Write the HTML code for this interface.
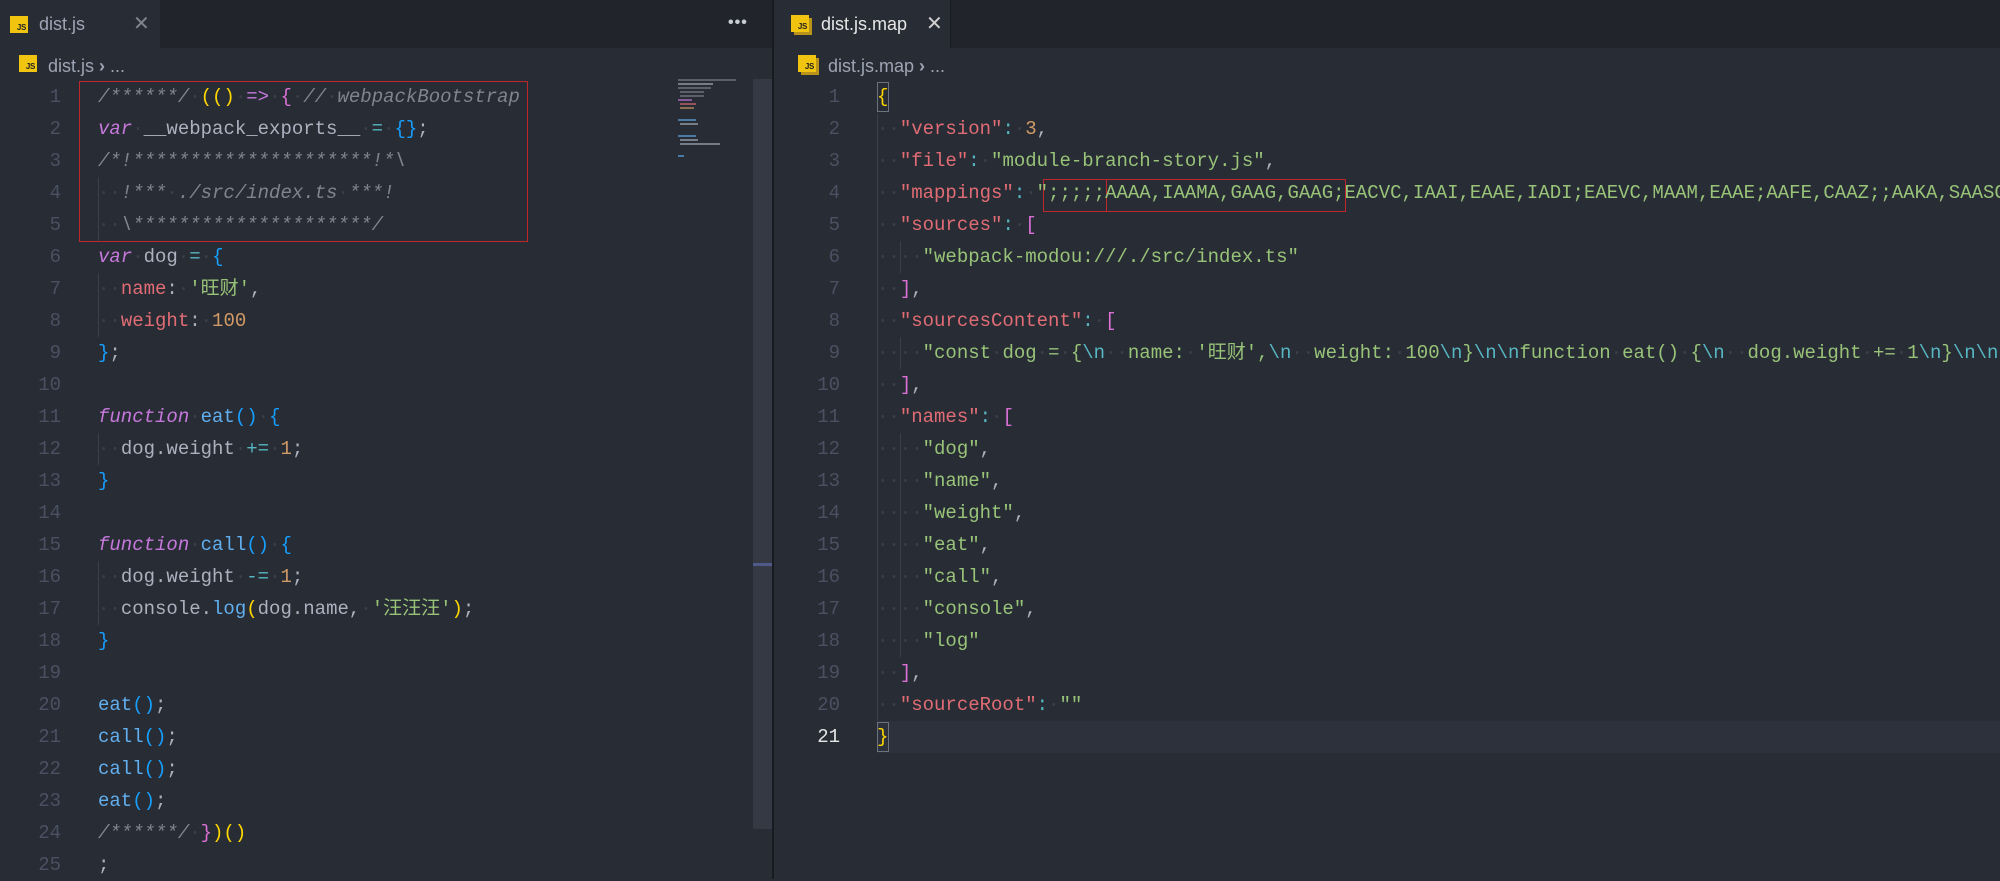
<!DOCTYPE html>
<html><head><meta charset="utf-8"><style>
*{margin:0;padding:0;box-sizing:border-box}
body{width:2000px;height:879px;background:#282c34;overflow:hidden;position:relative;font-family:"Liberation Sans","Noto Sans CJK SC",sans-serif}
.bar{position:absolute;top:0;height:48px;background:#21252b}
.tab{position:absolute;top:0;height:48px;background:#282c34;color:#9da5b4;font-size:18px;line-height:48px}
.ico{position:absolute;width:18px;height:17px;background:#f1c40f;color:#222;font:bold 8px/9px "Liberation Sans",sans-serif;text-align:right;padding-top:7px;padding-right:2px;letter-spacing:-0.3px}
.code{position:absolute;font-family:"Liberation Mono","Noto Sans CJK SC",monospace;font-size:19px;line-height:32px;height:32px;white-space:pre;color:#abb2bf}
.ln{position:absolute;font-family:"Liberation Mono",monospace;font-size:19px;line-height:32px;color:#495162;text-align:right;width:40px}
i{font-style:normal;color:#3b4048}
.c{color:#7f848e;font-style:italic}.k{color:#c678dd;font-style:italic}.o{color:#56b6c2}.g{color:#ffd700}.p{color:#da70d6}.b{color:#179fff}
.r{color:#e06c75}.s{color:#98c379}.n{color:#d19a66}.f{color:#61afef}
.guide{position:absolute;width:1px;background:#3b4048}
.mm{position:absolute;height:2px;opacity:.6}
</style></head><body>
<!-- left pane -->
<div class="bar" style="left:0;width:772px"></div>
<div class="tab" style="left:0;width:160px"><div class="ico" style="left:10px;top:16px">JS</div><span style="position:absolute;left:39px">dist.js</span><span style="position:absolute;left:133px;font-size:20px;color:#7f848e">✕</span></div>
<div style="position:absolute;left:728px;top:14px;color:#c8ccd4;font-size:16px;letter-spacing:1px;font-weight:bold">•••</div>
<div class="ico" style="left:19px;top:55px">JS</div>
<div style="position:absolute;left:48px;top:52px;color:#9da5b4;font-size:18px;line-height:28px">dist.js <span style="font-weight:bold">›</span> ...</div>
<div style="position:absolute;left:772px;top:0;width:2px;height:879px;background:#181a1f"></div>
<div style="position:absolute;left:753px;top:79px;width:19px;height:750px;background:#343944"></div>
<div style="position:absolute;left:753px;top:563px;width:19px;height:3px;background:#4d5a8a"></div>
<div style="position:absolute;left:678px;top:79px;width:75px;height:80px">
<div class="mm" style="left:0;top:0;width:58px;background:#7f848e"></div>
<div class="mm" style="left:0;top:4px;width:35px;background:#abb2bf"></div>
<div class="mm" style="left:0;top:8px;width:33px;background:#7f848e"></div>
<div class="mm" style="left:2px;top:12px;width:24px;background:#7f848e"></div>
<div class="mm" style="left:2px;top:16px;width:24px;background:#7f848e"></div>
<div class="mm" style="left:0;top:20px;width:14px;background:#c678dd"></div>
<div class="mm" style="left:2px;top:24px;width:16px;background:#e06c75"></div>
<div class="mm" style="left:2px;top:28px;width:14px;background:#d19a66"></div>
<div class="mm" style="left:0;top:40px;width:18px;background:#61afef"></div>
<div class="mm" style="left:2px;top:44px;width:18px;background:#abb2bf"></div>
<div class="mm" style="left:0;top:56px;width:18px;background:#61afef"></div>
<div class="mm" style="left:2px;top:60px;width:18px;background:#abb2bf"></div>
<div class="mm" style="left:2px;top:64px;width:40px;background:#abb2bf"></div>
<div class="mm" style="left:0;top:76px;width:6px;background:#61afef"></div>
</div>
<div style="position:absolute;left:79px;top:81px;width:449px;height:161px;border:1px solid #c0272d"></div>
<div class="guide" style="left:98px;top:177px;height:64px"></div>
<div class="guide" style="left:98px;top:273px;height:64px"></div>
<div class="guide" style="left:98px;top:433px;height:32px"></div>
<div class="guide" style="left:98px;top:561px;height:64px"></div>

<div class="ln" style="left:21px;top:81px">1</div><div class="code" style="left:98px;top:81px"><span class="c">/******/</span><i>·</i><span class="g">(()</span><i>·</i><span class="k" style="font-style:normal">=&gt;</span><i>·</i><span class="p">{</span><i>·</i><span class="c">//<i>·</i>webpackBootstrap</span></div>
<div class="ln" style="left:21px;top:113px">2</div><div class="code" style="left:98px;top:113px"><span class="k">var</span><i>·</i>__webpack_exports__<i>·</i><span class="o">=</span><i>·</i><span class="b">{}</span>;</div>
<div class="ln" style="left:21px;top:145px">3</div><div class="code" style="left:98px;top:145px"><span class="c">/*!*********************!*\</span></div>
<div class="ln" style="left:21px;top:177px">4</div><div class="code" style="left:98px;top:177px"><i>··</i><span class="c">!***<i>·</i>./src/index.ts<i>·</i>***!</span></div>
<div class="ln" style="left:21px;top:209px">5</div><div class="code" style="left:98px;top:209px"><i>··</i><span class="c">\*********************/</span></div>
<div class="ln" style="left:21px;top:241px">6</div><div class="code" style="left:98px;top:241px"><span class="k">var</span><i>·</i>dog<i>·</i><span class="o">=</span><i>·</i><span class="b">{</span></div>
<div class="ln" style="left:21px;top:273px">7</div><div class="code" style="left:98px;top:273px"><i>··</i><span class="r">name</span>:<i>·</i><span class="s">'旺财'</span>,</div>
<div class="ln" style="left:21px;top:305px">8</div><div class="code" style="left:98px;top:305px"><i>··</i><span class="r">weight</span>:<i>·</i><span class="n">100</span></div>
<div class="ln" style="left:21px;top:337px">9</div><div class="code" style="left:98px;top:337px"><span class="b">}</span>;</div>
<div class="ln" style="left:21px;top:369px">10</div>
<div class="ln" style="left:21px;top:401px">11</div><div class="code" style="left:98px;top:401px"><span class="k">function</span><i>·</i><span class="f">eat</span><span class="b">()</span><i>·</i><span class="b">{</span></div>
<div class="ln" style="left:21px;top:433px">12</div><div class="code" style="left:98px;top:433px"><i>··</i>dog.weight<i>·</i><span class="o">+=</span><i>·</i><span class="n">1</span>;</div>
<div class="ln" style="left:21px;top:465px">13</div><div class="code" style="left:98px;top:465px"><span class="b">}</span></div>
<div class="ln" style="left:21px;top:497px">14</div>
<div class="ln" style="left:21px;top:529px">15</div><div class="code" style="left:98px;top:529px"><span class="k">function</span><i>·</i><span class="f">call</span><span class="b">()</span><i>·</i><span class="b">{</span></div>
<div class="ln" style="left:21px;top:561px">16</div><div class="code" style="left:98px;top:561px"><i>··</i>dog.weight<i>·</i><span class="o">-=</span><i>·</i><span class="n">1</span>;</div>
<div class="ln" style="left:21px;top:593px">17</div><div class="code" style="left:98px;top:593px"><i>··</i>console.<span class="f">log</span><span class="g">(</span>dog.name,<i>·</i><span class="s">'汪汪汪'</span><span class="g">)</span>;</div>
<div class="ln" style="left:21px;top:625px">18</div><div class="code" style="left:98px;top:625px"><span class="b">}</span></div>
<div class="ln" style="left:21px;top:657px">19</div>
<div class="ln" style="left:21px;top:689px">20</div><div class="code" style="left:98px;top:689px"><span class="f">eat</span><span class="b">()</span>;</div>
<div class="ln" style="left:21px;top:721px">21</div><div class="code" style="left:98px;top:721px"><span class="f">call</span><span class="b">()</span>;</div>
<div class="ln" style="left:21px;top:753px">22</div><div class="code" style="left:98px;top:753px"><span class="f">call</span><span class="b">()</span>;</div>
<div class="ln" style="left:21px;top:785px">23</div><div class="code" style="left:98px;top:785px"><span class="f">eat</span><span class="b">()</span>;</div>
<div class="ln" style="left:21px;top:817px">24</div><div class="code" style="left:98px;top:817px"><span class="c">/******/</span><i>·</i><span class="p">}</span><span class="g">)()</span></div>
<div class="ln" style="left:21px;top:849px">25</div><div class="code" style="left:98px;top:849px">;</div>

<!-- right pane -->
<div class="bar" style="left:774px;width:1226px"></div>
<div class="tab" style="left:774px;width:176px;color:#e6e6e6"><div class="ico" style="left:17px;top:15px;box-shadow:3px 3px 0 #b8941a">JS</div><span style="position:absolute;left:47px">dist.js.map</span><span style="position:absolute;left:152px;font-size:20px;color:#d0d0d0">✕</span></div>
<div style="position:absolute;left:950px;top:0;width:1px;height:48px;background:#181a1f"></div>
<div class="ico" style="left:798px;top:55px;box-shadow:3px 3px 0 #b8941a">JS</div>
<div style="position:absolute;left:828px;top:52px;color:#9da5b4;font-size:18px;line-height:28px">dist.js.map <span style="font-weight:bold">›</span> ...</div>
<div style="position:absolute;left:877px;top:721px;width:1123px;height:32px;background:#2c313c"></div>
<div style="position:absolute;left:877px;top:82px;width:12px;height:30px;border:1px solid #6b7280"></div>
<div style="position:absolute;left:877px;top:722px;width:12px;height:30px;border:1px solid #6b7280"></div>
<div class="guide" style="left:877px;top:113px;height:608px;background:#3b4048"></div>
<div class="guide" style="left:900px;top:241px;height:32px"></div>
<div class="guide" style="left:900px;top:337px;height:32px"></div>
<div class="guide" style="left:900px;top:433px;height:224px"></div>
<div style="position:absolute;left:1043px;top:179px;width:303px;height:33px;border:1px solid #c0272d"></div>
<div style="position:absolute;left:1106px;top:179px;width:1px;height:33px;background:#c0272d"></div>

<div class="ln" style="left:800px;top:81px">1</div><div class="code" style="left:877px;top:81px"><span class="g">{</span></div>
<div class="ln" style="left:800px;top:113px">2</div><div class="code" style="left:877px;top:113px"><i>··</i><span class="r">"version"</span><span class="o">:</span><i>·</i><span class="n">3</span>,</div>
<div class="ln" style="left:800px;top:145px">3</div><div class="code" style="left:877px;top:145px"><i>··</i><span class="r">"file"</span><span class="o">:</span><i>·</i><span class="s">"module-branch-story.js"</span>,</div>
<div class="ln" style="left:800px;top:177px">4</div><div class="code" style="left:877px;top:177px"><i>··</i><span class="r">"mappings"</span><span class="o">:</span><i>·</i><span class="s">";;;;;AAAA,IAAMA,GAAG,GAAG;EACVC,IAAI,EAAE,IADI;EAEVC,MAAM,EAAE;AAFE,CAAZ;;AAKA,SAASC,GAAT</span></div>
<div class="ln" style="left:800px;top:209px">5</div><div class="code" style="left:877px;top:209px"><i>··</i><span class="r">"sources"</span><span class="o">:</span><i>·</i><span class="p">[</span></div>
<div class="ln" style="left:800px;top:241px">6</div><div class="code" style="left:877px;top:241px"><i>····</i><span class="s">"webpack-modou:///./src/index.ts"</span></div>
<div class="ln" style="left:800px;top:273px">7</div><div class="code" style="left:877px;top:273px"><i>··</i><span class="p">]</span>,</div>
<div class="ln" style="left:800px;top:305px">8</div><div class="code" style="left:877px;top:305px"><i>··</i><span class="r">"sourcesContent"</span><span class="o">:</span><i>·</i><span class="p">[</span></div>
<div class="ln" style="left:800px;top:337px">9</div><div class="code" style="left:877px;top:337px"><i>····</i><span class="s">"const<i>·</i>dog<i>·</i>=<i>·</i>{<span class="o">\n</span><i>··</i>name:<i>·</i>'旺财',<span class="o">\n</span><i>··</i>weight:<i>·</i>100<span class="o">\n</span>}<span class="o">\n\n</span>function<i>·</i>eat()<i>·</i>{<span class="o">\n</span><i>··</i>dog.weight<i>·</i>+=<i>·</i>1<span class="o">\n</span>}<span class="o">\n\n</span></span></div>
<div class="ln" style="left:800px;top:369px">10</div><div class="code" style="left:877px;top:369px"><i>··</i><span class="p">]</span>,</div>
<div class="ln" style="left:800px;top:401px">11</div><div class="code" style="left:877px;top:401px"><i>··</i><span class="r">"names"</span><span class="o">:</span><i>·</i><span class="p">[</span></div>
<div class="ln" style="left:800px;top:433px">12</div><div class="code" style="left:877px;top:433px"><i>····</i><span class="s">"dog"</span>,</div>
<div class="ln" style="left:800px;top:465px">13</div><div class="code" style="left:877px;top:465px"><i>····</i><span class="s">"name"</span>,</div>
<div class="ln" style="left:800px;top:497px">14</div><div class="code" style="left:877px;top:497px"><i>····</i><span class="s">"weight"</span>,</div>
<div class="ln" style="left:800px;top:529px">15</div><div class="code" style="left:877px;top:529px"><i>····</i><span class="s">"eat"</span>,</div>
<div class="ln" style="left:800px;top:561px">16</div><div class="code" style="left:877px;top:561px"><i>····</i><span class="s">"call"</span>,</div>
<div class="ln" style="left:800px;top:593px">17</div><div class="code" style="left:877px;top:593px"><i>····</i><span class="s">"console"</span>,</div>
<div class="ln" style="left:800px;top:625px">18</div><div class="code" style="left:877px;top:625px"><i>····</i><span class="s">"log"</span></div>
<div class="ln" style="left:800px;top:657px">19</div><div class="code" style="left:877px;top:657px"><i>··</i><span class="p">]</span>,</div>
<div class="ln" style="left:800px;top:689px">20</div><div class="code" style="left:877px;top:689px"><i>··</i><span class="r">"sourceRoot"</span><span class="o">:</span><i>·</i><span class="s">""</span></div>
<div class="ln" style="left:800px;top:721px;color:#e6e6e6">21</div><div class="code" style="left:877px;top:721px"><span class="g">}</span></div>
</body></html>
